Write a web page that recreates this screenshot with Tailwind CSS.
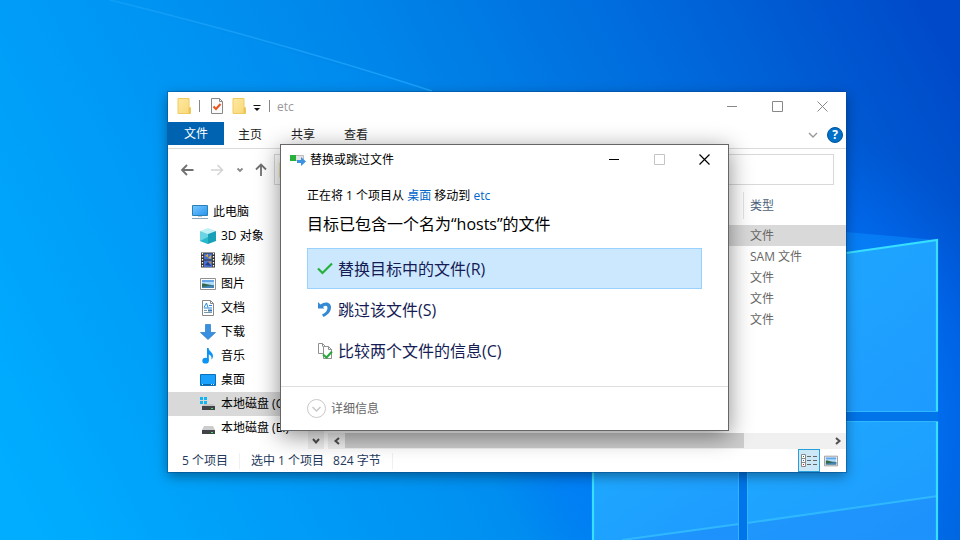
<!DOCTYPE html>
<html lang="zh-CN">
<head>
    <meta charset="UTF-8">
    <meta name="viewport" content="width=device-width, initial-scale=1.0">
    <title>etc</title>
    <script src="https://cdn.jsdelivr.net/npm/@tailwindcss/browser@4"></script>
</head>
<body class="relative h-screen overflow-hidden bg-[#0090f8] font-['Open_Sans','Noto_Sans_CJK_SC',sans-serif] text-xs leading-4 text-black">

    <!-- Wallpaper -->
    <svg class="absolute inset-0 w-full h-full" viewBox="0 0 960 540" preserveAspectRatio="none" aria-hidden="true">
        <defs>
            <linearGradient id="sky" gradientUnits="userSpaceOnUse" x1="40" y1="540" x2="960" y2="60">
                <stop offset="0" stop-color="#00b0ff"/>
                <stop offset="0.2" stop-color="#009ef7"/>
                <stop offset="0.5" stop-color="#0086ea"/>
                <stop offset="0.75" stop-color="#006adc"/>
                <stop offset="1" stop-color="#0049c8"/>
            </linearGradient>
            <radialGradient id="glow" gradientUnits="userSpaceOnUse" cx="760" cy="400" r="280">
                <stop offset="0" stop-color="#0090ff"/>
                <stop offset="0.5" stop-color="#007cff" stop-opacity="0.75"/>
                <stop offset="0.75" stop-color="#0070ff" stop-opacity="0.4"/>
                <stop offset="1" stop-color="#0068f8" stop-opacity="0"/>
            </radialGradient>
            <linearGradient id="beam" x1="0" y1="0" x2="1" y2="0">
                <stop offset="0" stop-color="#30b0ff" stop-opacity="0.3"/>
                <stop offset="1" stop-color="#20a8ff" stop-opacity="0.8"/>
            </linearGradient>
            <linearGradient id="pane" x1="0" y1="0" x2="1" y2="1">
                <stop offset="0" stop-color="#1eaaff"/>
                <stop offset="1" stop-color="#1e9aff"/>
            </linearGradient>
        </defs>
        <rect width="960" height="540" fill="url(#sky)"/>
        <path d="M110 0L432 91L846 215V540H0V0Z" fill="#00a0ff" opacity="0.12"/>
        <rect width="960" height="540" fill="url(#glow)"/>
        <path d="M110 0Q280 42 432 91" fill="none" stroke="url(#beam)" stroke-width="1.6"/>
        <path d="M846 232L937 240L846 253Z" fill="#0c90ff" opacity="0.5"/>
        <path d="M593 440H739V540H593Z" fill="url(#pane)"/>
        <path d="M747 421H938V540H747Z" fill="url(#pane)"/>
        <path d="M747 268L938 240V411H747Z" fill="url(#pane)"/>
        <path d="M739 440H747V540H739ZM747 412H938V421H747Z" fill="#0074e8"/>
        <path d="M622 540L739 524V540ZM747 523L938 496V540H747Z" fill="#2088f8" opacity="0.45"/>
        <path d="M622 540L739 524M747 523L938 496" stroke="#30b8ff" stroke-width="2"/>
        <path d="M593 440V540M846 253L937 240V411M937 421V540" fill="none" stroke="#38e0ff" stroke-width="2.2"/>
        <path d="M846 411.500H938M846 421.500H938M738.500 440V540M747.500 440V540" stroke="#2cb8ff" stroke-width="1"/>
    </svg>

    <!-- Shared icons -->
    <svg class="absolute size-0" aria-hidden="true">
        <defs>
            <linearGradient id="folder-fill" x1="0" y1="0" x2="1" y2="1">
                <stop offset="0" stop-color="#ffe8a0"/>
                <stop offset="1" stop-color="#f8d878"/>
            </linearGradient>
            <linearGradient id="screen-fill" x1="0" y1="0" x2="1" y2="1">
                <stop offset="0" stop-color="#7cc8fc"/>
                <stop offset="1" stop-color="#2494f0"/>
            </linearGradient>
            <symbol id="folder" viewBox="0 0 16 16">
                <path d="M2 .5H13V9L14.500 10V15.500H2Z" fill="url(#folder-fill)" stroke="#f0cc60"/>
                <path d="M12.500 15V10L14.500 9V15.500H11.500Z" fill="#ecc454"/>
            </symbol>
            <symbol id="picture" viewBox="0 0 16 16">
                <path d="M.5 2.500H15.500V13.500H.5Z" fill="#fff" stroke="#909090"/>
                <path d="M2 4H14V12H2Z" fill="#b0dcfc"/>
                <path d="M2 4H14V6H2Z" fill="#64a4e8"/>
                <path d="M2 7.500C5 7 7 9 14 9V12H2Z" fill="#34684c"/>
                <path d="M2 11L14 9V12H2Z" fill="#4484b8"/>
            </symbol>
        </defs>
    </svg>

    <!-- Explorer window -->
    <section aria-label="etc" class="absolute left-[168px] right-[114px] top-[92px] flex flex-col bg-white shadow-[0_0_0_1px_rgba(0,70,140,0.45),0_4px_12px_rgba(0,0,0,0.4)]">

        <header class="flex h-[30px] items-start justify-between">
            <div class="flex h-7 items-center pl-2">
                <svg class="size-4" aria-hidden="true"><use href="#folder"/></svg>
                <span class="ml-[7px] h-3 w-px bg-[#888]"></span>
                <button type="button" aria-label="属性" class="ml-[9px]">
                    <svg class="size-4" viewBox="0 0 16 16" fill="none">
                        <path d="M2.500 .5H10.500L13.500 3.500V15.500H2.500Z" fill="#fafafa" stroke="#888"/>
                        <path d="M10.500 .5V3.500H13.500" stroke="#888"/>
                        <path d="M4.500 8.500L7 11L11.500 6" stroke="#e8541c" stroke-width="2"/>
                    </svg>
                </button>
                <button type="button" aria-label="新建文件夹" class="ml-[6px]">
                    <svg class="size-4"><use href="#folder"/></svg>
                </button>
                <button type="button" aria-label="自定义快速访问工具栏" class="ml-[6px]">
                    <svg class="h-4 w-2" viewBox="0 0 8 16"><path d="M.5 7.500H7.500" stroke="#111"/><path d="M1 10H7L4 13Z" fill="#111"/></svg>
                </button>
                <span class="ml-2 h-3 w-px bg-[#888]"></span>
                <h1 class="ml-[7px] pt-px text-[#999]">etc</h1>
            </div>
            <div class="flex pr-px text-[#888]">
                <button type="button" aria-label="最小化" class="flex h-7 w-[45px] items-center justify-center">
                    <svg class="size-[11px]" viewBox="0 0 11 11" stroke="currentColor"><path d="M0 5.500H10"/></svg>
                </button>
                <button type="button" aria-label="最大化" class="flex h-7 w-[45px] items-center justify-center">
                    <svg class="size-[11px]" viewBox="0 0 11 11" fill="none" stroke="currentColor"><path d="M.5 .5H10.500V10.500H.5Z"/></svg>
                </button>
                <button type="button" aria-label="关闭" class="flex h-7 w-[45px] items-center justify-center">
                    <svg class="size-[11px]" viewBox="0 0 11 11" stroke="currentColor"><path d="M.5 .5L10.500 10.500M10.500 .5L.5 10.500"/></svg>
                </button>
            </div>
        </header>

        <nav aria-label="功能区" class="flex h-[27px] items-start border-b border-[#dadbdc] text-[#222]">
            <button type="button" class="h-[23px] w-14 bg-[#0063b1] text-white">文件</button>
            <div class="ml-[14px] flex h-[26px] items-center gap-[29px]">
                <button type="button">主页</button>
                <button type="button">共享</button>
                <button type="button">查看</button>
            </div>
            <div class="ml-auto flex h-[26px] items-center gap-[9px] pr-[3px]">
                <button type="button" aria-label="展开功能区">
                    <svg class="size-[10px]" viewBox="0 0 10 10" fill="none" stroke="#999" stroke-width="1.400"><path d="M1 3L5 7L9 3"/></svg>
                </button>
                <button type="button" aria-label="帮助" class="flex size-4 items-center justify-center rounded-full border border-[#00549c] bg-[#0070c8] font-bold text-white">?</button>
            </div>
        </nav>

        <div class="flex h-[41px] items-center px-3">
            <button type="button" aria-label="返回">
                <svg class="size-4" viewBox="0 0 16 16" fill="none" stroke="#707070" stroke-width="1.800"><path d="M13.500 8H2M7 3L2 8L7 13"/></svg>
            </button>
            <button type="button" aria-label="前进" class="ml-[13px]">
                <svg class="size-4" viewBox="0 0 16 16" fill="none" stroke="#d4d4d4" stroke-width="1.500"><path d="M2 8H13.500M8.500 3L13.500 8L8.500 13"/></svg>
            </button>
            <button type="button" aria-label="最近浏览的位置" class="ml-[11px]">
                <svg class="size-2" viewBox="0 0 8 8" fill="none" stroke="#888" stroke-width="1.800"><path d="M1.500 2.500L4 5L6.500 2.500"/></svg>
            </button>
            <button type="button" aria-label="上移" class="ml-[9px]">
                <svg class="size-4" viewBox="0 0 16 16" fill="none" stroke="#707070" stroke-width="1.800"><path d="M8 14V2.500M3 7.500L8 2.500L13 7.500"/></svg>
            </button>
            <div class="ml-[5px] flex h-[31px] flex-1 items-center border border-[#d9d9d9] pl-[3px]">
                <svg class="size-4" aria-hidden="true"><use href="#folder"/></svg>
                <input type="text" aria-label="地址" class="ml-1 h-full min-w-0 flex-1 outline-none">
            </div>
        </div>

        <div class="flex">
            <!-- Navigation pane -->
            <div class="flex w-[156px] shrink-0">
                <ul class="min-w-0 flex-1 pb-[9px] pt-[10px] whitespace-nowrap">
                    <li>
                        <a href="#" class="flex h-6 items-center gap-[5px] pl-6">
                            <svg class="size-4 shrink-0" viewBox="0 0 16 16">
                                <path d="M.5 1.500H15.500V11.500H.5Z" fill="url(#screen-fill)" stroke="#2880b8"/>
                                <path d="M6 12H10V13H6Z" fill="#bcc8d0"/>
                                <path d="M0 14.500H16" stroke="#8ca4b4"/>
                            </svg>
                            此电脑
                        </a>
                    </li>
                    <li>
                        <a href="#" class="flex h-6 items-center gap-[5px] pl-8">
                            <svg class="size-4 shrink-0" viewBox="0 0 16 16">
                                <path d="M0 3L8 0L16 3L8 6Z" fill="#c0f0f4"/>
                                <path d="M0 3L8 6V16L0 13Z" fill="#68d4e4"/>
                                <path d="M16 3L8 6V16L16 13Z" fill="#18a0b8"/>
                                <path d="M0 13L8 9V16Z" fill="#28b8cc"/>
                            </svg>
                            3D 对象
                        </a>
                    </li>
                    <li>
                        <a href="#" class="flex h-6 items-center gap-[5px] pl-8">
                            <svg class="size-4 shrink-0" viewBox="0 0 16 16">
                                <path d="M1 .5H15V15.500H1Z" fill="#333"/>
                                <path d="M4 1.500H12V7.500H4ZM4 8.500H12V15H4Z" fill="#4870d0"/>
                                <path d="M5 4L8 2V5ZM8 6L11 3V7Z" fill="#e8b030"/>
                                <path d="M5 13L8 10L11 14Z" fill="#283c80"/>
                                <path d="M8 9.500H11V12Z" fill="#d88c28"/>
                                <path d="M2.500 1V15M13.500 1V15" stroke="#fff" stroke-width="1.300" stroke-dasharray="1.500 1.500"/>
                            </svg>
                            视频
                        </a>
                    </li>
                    <li>
                        <a href="#" class="flex h-6 items-center gap-[5px] pl-8">
                            <svg class="size-4 shrink-0"><use href="#picture"/></svg>
                            图片
                        </a>
                    </li>
                    <li>
                        <a href="#" class="flex h-6 items-center gap-[5px] pl-8">
                            <svg class="size-4 shrink-0" viewBox="0 0 16 16" fill="none">
                                <path d="M2.500 .5H10.500L13.500 3.500V15.500H2.500Z" fill="#fff" stroke="#888"/>
                                <path d="M10.500 .5V3.500H13.500" stroke="#888"/>
                                <path d="M4 7.500L6.500 3L8 7.500M9 5.500H12M4 8H12" stroke="#2888d8"/>
                                <path d="M4 10.500H7M4 12.500H12" stroke="#7898b0"/>
                                <path d="M8 9.500H12V11.500H8Z" fill="#3c78b0"/>
                            </svg>
                            文档
                        </a>
                    </li>
                    <li>
                        <a href="#" class="flex h-6 items-center gap-[5px] pl-8">
                            <svg class="size-4 shrink-0" viewBox="0 0 16 16"><path d="M5.500 .5H10.500V8.500H15.500L8 15.500L.5 8.500H5.500Z" fill="#3890e0" stroke="#2878c8" stroke-width=".7"/></svg>
                            下载
                        </a>
                    </li>
                    <li>
                        <a href="#" class="flex h-6 items-center gap-[5px] pl-8">
                            <svg class="size-4 shrink-0" viewBox="0 0 16 16">
                                <path d="M7 0H8.600C8.800 3.500 13 4 13 8C13 10 12 11 11.400 11.500C12 8.500 10.500 7 8.800 6.500V12.500H7Z" fill="#0c94f4"/>
                                <ellipse cx="5.600" cy="12.700" rx="3.300" ry="2.900" fill="#0c94f4"/>
                            </svg>
                            音乐
                        </a>
                    </li>
                    <li>
                        <a href="#" class="flex h-6 items-center gap-[5px] pl-8">
                            <svg class="size-4 shrink-0" viewBox="0 0 16 16">
                                <path d="M.5 2.500H15.500V13.500H.5Z" fill="#18a0fc" stroke="#0c70b8"/>
                                <path d="M1 12.500H15" stroke="#0868b0"/>
                                <path d="M2 12.500H3M11 12.500H12M13 12.500H14" stroke="#d0ecff"/>
                            </svg>
                            桌面
                        </a>
                    </li>
                    <li>
                        <a href="#" aria-current="true" class="flex h-6 items-center gap-[5px] bg-[#d9d9d9] pl-8">
                            <svg class="size-4 shrink-0" viewBox="0 0 16 16">
                                <path d="M0 1H3V4H0ZM4 1H7V4H4ZM0 5H3V8H0ZM4 5H7V8H4Z" fill="#14b4f0"/>
                                <path d="M4 8H13L15 10H2Z" fill="#c4c4c4"/>
                                <path d="M2 10H15V14H2Z" fill="#404448"/>
                                <path d="M11 12H13V13H11Z" fill="#40e060"/>
                            </svg>
                            本地磁盘 (C:)
                        </a>
                    </li>
                    <li>
                        <a href="#" class="flex h-6 items-center gap-[5px] pl-8">
                            <svg class="size-4 shrink-0" viewBox="0 0 16 16">
                                <path d="M4 6H13L15 10H2Z" fill="#ccc"/>
                                <path d="M2 10H15V14H2Z" fill="#404448"/>
                                <path d="M11 12H13V13H11Z" fill="#40e060"/>
                            </svg>
                            本地磁盘 (E:)
                        </a>
                    </li>
                </ul>
                <div class="flex w-4 flex-col justify-end bg-[#f0f0f0]">
                    <button type="button" aria-label="向下滚动" class="flex h-4 items-center justify-center">
                        <svg class="size-2" viewBox="0 0 8 8" fill="none" stroke="#505050" stroke-width="2"><path d="M1 2L4 5.500L7 2"/></svg>
                    </button>
                </div>
            </div>

            <!-- File list -->
            <div class="ml-1 flex min-w-0 flex-1 flex-col justify-between">
                <table class="w-full text-left text-[#666]">
                    <thead class="text-[#4c607a]">
                        <tr class="h-[35px] align-top">
                            <td></td>
                            <th scope="col" class="w-[103px] pt-[2px] font-normal"><div class="flex h-[27px] items-center border-l border-[#e5e5e5] pl-[6px]">类型</div></th>
                        </tr>
                    </thead>
                    <tbody>
                        <tr class="h-[21px] bg-[#d9d9d9]"><td></td><td class="pl-[7px]">文件</td></tr>
                        <tr class="h-[21px]"><td></td><td class="pl-[7px]">SAM 文件</td></tr>
                        <tr class="h-[21px]"><td></td><td class="pl-[7px]">文件</td></tr>
                        <tr class="h-[21px]"><td></td><td class="pl-[7px]">文件</td></tr>
                        <tr class="h-[21px]"><td></td><td class="pl-[7px]">文件</td></tr>
                    </tbody>
                </table>
                <div class="flex h-4 bg-[#f0f0f0]">
                    <button type="button" aria-label="向左滚动" class="flex w-[17px] items-center justify-center">
                        <svg class="size-2" viewBox="0 0 8 8" fill="none" stroke="#505050" stroke-width="2"><path d="M6 1L2.500 4L6 7"/></svg>
                    </button>
                    <div class="flex-1"><div class="h-[15px] w-[82.5%] bg-[#cdcdcd]"></div></div>
                    <button type="button" aria-label="向右滚动" class="flex w-[17px] items-center justify-center">
                        <svg class="size-2" viewBox="0 0 8 8" fill="none" stroke="#505050" stroke-width="2"><path d="M2 1L5.500 4L2 7"/></svg>
                    </button>
                </div>
            </div>
        </div>

        <!-- Status bar -->
        <footer class="flex h-[23px] items-center pl-[14px] text-[#1e395b]">
            <span>5 个项目</span>
            <span class="ml-[11px] h-4 w-px bg-[#f0f0f0]"></span>
            <span class="ml-[11px]">选中 1 个项目</span>
            <span class="ml-[9px]">824 字节</span>
            <span class="ml-[11px] h-4 w-px bg-[#f0f0f0]"></span>
            <div class="ml-auto flex items-center gap-[4px] pr-2">
                <button type="button" aria-label="详细信息" class="flex h-[23px] w-[22px] items-center justify-center border border-[#26a0da] bg-[#cce8f6]">
                    <svg class="size-4" viewBox="0 0 16 16" fill="none">
                        <path d="M.5 1.500H4.500V13.500H.5ZM.5 5.500H4.500M.5 9.500H4.500" fill="#fff" stroke="#888"/>
                        <path d="M2 3.500H3" stroke="#308030"/><path d="M2 7.500H3" stroke="#3060e0"/><path d="M2 11.500H3" stroke="#e02020"/>
                        <path d="M6 3.500H10M12 3.500H16M6 7.500H10M12 7.500H16M6 11.500H10M12 11.500H16" stroke="#666"/>
                    </svg>
                </button>
                <button type="button" aria-label="大缩略图">
                    <svg class="size-[14px]"><use href="#picture"/></svg>
                </button>
            </div>
        </footer>
    </section>

    <!-- Replace or skip dialog -->
    <section role="dialog" aria-labelledby="dialog-title" class="absolute left-[280px] right-[231px] top-[144px] flex flex-col border border-[#666] bg-white shadow-[0_5px_22px_rgba(0,0,0,0.45)]">
        <header class="flex h-[29px] items-center">
            <svg class="ml-[9px] size-4" viewBox="0 0 16 16" aria-hidden="true">
                <path d="M.5 3.500H13.500V8.500H.5Z" fill="#e4e4e4" stroke="#bcbcbc"/>
                <path d="M0 3H6V9H0Z" fill="#28b03c"/>
                <path d="M7 8H11V5L16 9.500L11 14V11H7Z" fill="#3c94e0"/>
            </svg>
            <h2 id="dialog-title" class="ml-1">替换或跳过文件</h2>
            <div class="ml-auto flex h-full pr-px">
                <button type="button" aria-label="最小化" class="flex w-[45px] items-center justify-center">
                    <svg class="size-[11px]" viewBox="0 0 11 11" stroke="#000"><path d="M0 5.500H10"/></svg>
                </button>
                <button type="button" aria-label="最大化" disabled class="flex w-[45px] items-center justify-center">
                    <svg class="size-[11px]" viewBox="0 0 11 11" fill="none" stroke="#c4c4c4"><path d="M.5 .5H10.500V10.500H.5Z"/></svg>
                </button>
                <button type="button" aria-label="关闭" class="flex w-[45px] items-center justify-center">
                    <svg class="size-[11px]" viewBox="0 0 11 11" stroke="#000" stroke-width="1.200"><path d="M.5 .5L10.500 10.500M10.500 .5L.5 10.500"/></svg>
                </button>
            </div>
        </header>

        <div class="px-[26px] pb-[15px] pt-[14px]">
            <p>正在将 1 个项目从 <a href="#" class="text-[#0066cc]">桌面</a> 移动到 <a href="#" class="text-[#0066cc]">etc</a></p>
            <p class="mt-2 text-base leading-6">目标已包含一个名为“hosts”的文件</p>
            <div class="mt-3 flex flex-col text-base text-[#151c55]">
                <button type="button" class="flex h-[41px] items-center gap-[5px] border border-[#99d1ff] bg-[#cce8ff] pl-[9px]">
                    <svg class="size-4" viewBox="0 0 16 16" fill="none" stroke="#28b03c" stroke-width="2.200"><path d="M1 7.500L5.500 12L15 2.500"/></svg>
                    替换目标中的文件(R)
                </button>
                <button type="button" class="flex h-[41px] items-center gap-[5px] border border-transparent pl-[9px]">
                    <svg class="size-4" viewBox="0 0 16 16">
                        <path d="M1 0L3.500 2.500C8-1 14 0 14 5.500C14 10 10.500 13 6.500 15L5 12.500C8.500 11 10.500 8.500 10.500 6C10.500 3.500 8 3 6 5L7.500 6.500H1Z" fill="#3488d4"/>
                    </svg>
                    跳过该文件(S)
                </button>
                <button type="button" class="flex h-[41px] items-center gap-[5px] border border-transparent pl-[9px]">
                    <svg class="size-4" viewBox="0 0 16 16" fill="none" stroke="#909090">
                        <path d="M1.500 .5H5.500L8.500 3.500V10.500H1.500Z" fill="#fff"/>
                        <path d="M5.500 .5V3.500"/>
                        <path d="M6.500 3.500H11.500L14.500 6.500V15.500H6.500Z" fill="#fff"/>
                        <path d="M11.500 3.500V6.500H14.500"/>
                        <path d="M6 11.500L9.500 14.500L15 8.500" stroke="#28a838" stroke-width="2"/>
                    </svg>
                    比较两个文件的信息(C)
                </button>
            </div>
        </div>

        <footer class="border-t border-[#dfdfdf] px-[26px] py-[12px]">
            <button type="button" class="flex items-center gap-[5px] text-[#666]">
                <svg class="size-[19px]" viewBox="0 0 19 19" fill="none" stroke="#c8c8c8">
                    <circle cx="9.500" cy="9.500" r="9"/>
                    <path d="M5.500 8L9.500 12L13.500 8" stroke-width="1.500"/>
                </svg>
                详细信息
            </button>
        </footer>
    </section>
</body>
</html>
